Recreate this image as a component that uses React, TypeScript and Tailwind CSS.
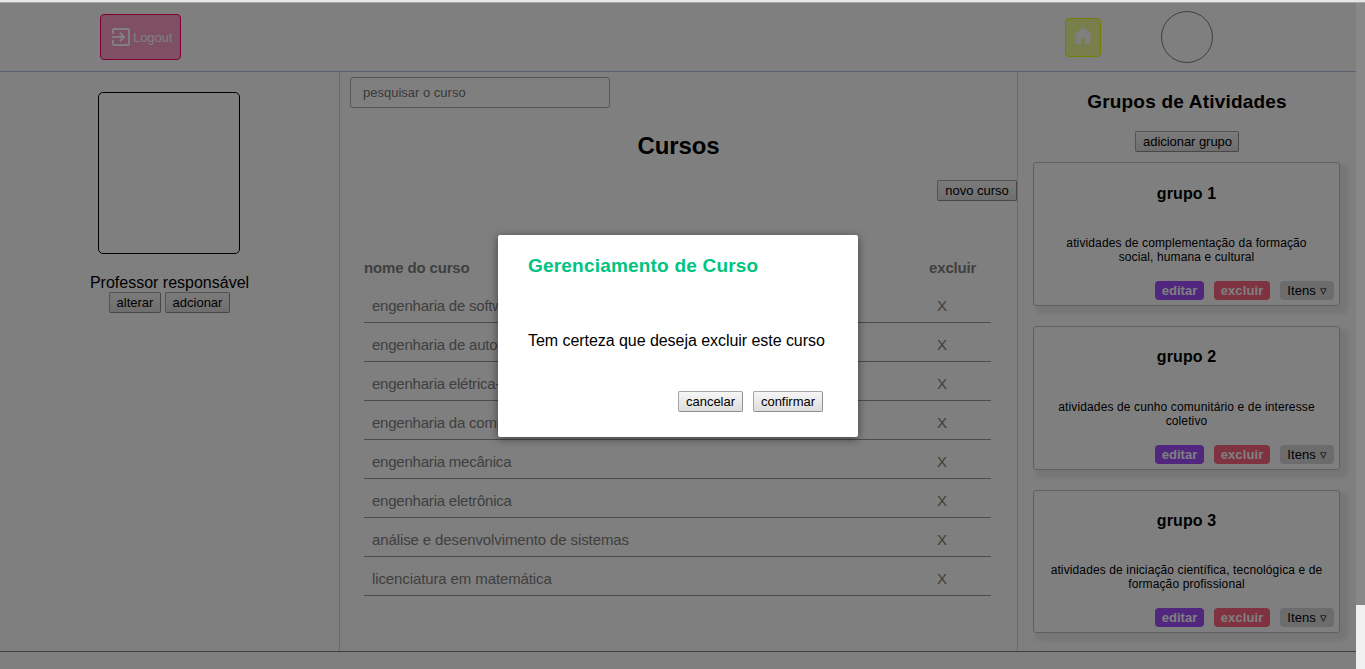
import type { ReactNode } from "react";
import { MdExitToApp, MdHome } from "react-icons/md";

const cursos = [
  "engenharia de software",
  "engenharia de automação",
  "engenharia elétrica-eletrônica",
  "engenharia da computação",
  "engenharia mecânica",
  "engenharia eletrônica",
  "análise e desenvolvimento de sistemas",
  "licenciatura em matemática",
];

const grupos = [
  { nome: "grupo 1", descricao: "atividades de complementação da formação social, humana e cultural" },
  { nome: "grupo 2", descricao: "atividades de cunho comunitário e de interesse coletivo" },
  { nome: "grupo 3", descricao: "atividades de iniciação científica, tecnológica e de formação profissional" },
];

function Botao({ children, className }: { children: ReactNode; className: string }) {
  return (
    <button
      className={`flex h-[21px] shrink-0 items-center justify-center whitespace-nowrap rounded-[2px] border border-[#a6a6a6] border-b-[#8f8f8f] border-r-[#8f8f8f] bg-linear-to-b from-[#f6f6f6] to-[#dddddd] text-[13px] leading-[15px] text-black ${className}`}
    >
      {children}
    </button>
  );
}

function Cabecalho() {
  return (
    <header className="flex h-[69px] shrink-0 items-start border-b border-[#b0c4de]">
      <button className="mt-[11px] ml-[100px] flex h-[46px] w-[81px] items-center rounded-[4px] border border-[#ff0066] bg-[#ffa0c8] pl-2 text-[13px] text-white">
        <MdExitToApp size={24} className="shrink-0" />
        <span className="pt-px tracking-[-0.1px]">Logout</span>
      </button>
      <button className="mt-[15px] ml-auto flex h-[39px] w-9 items-start justify-center rounded-[4px] border border-[#e1ff00] bg-[#f0ff99] pt-[5px] text-white">
        <MdHome size={24} className="shrink-0" />
      </button>
      <div className="mt-2 mr-[143px] ml-[60px] size-[52px] rounded-full border border-[#808080]" />
    </header>
  );
}

function Perfil() {
  return (
    <aside className="flex w-[340px] shrink-0 flex-col items-center border-r border-[#d3d3d3] pt-5">
      <div className="mr-px h-[162px] w-[142px] rounded-[5px] border border-black" />
      <p className="mt-5 text-base leading-[18px]">Professor responsável</p>
      <div className="flex gap-1">
        <Botao className="w-[52px]">alterar</Botao>
        <Botao className="w-[65px]">adcionar</Botao>
      </div>
    </aside>
  );
}

function Cursos() {
  return (
    <main className="flex w-[678px] shrink-0 flex-col border-r border-[#d3d3d3]">
      <input
        placeholder="pesquisar o curso"
        className="mt-[5px] ml-[10px] h-[31px] w-[260px] rounded-[3px] border border-[#a9a9a9] px-3 text-[13px] placeholder:text-[#757575]"
      />
      <h1 className="mt-6 text-center text-2xl leading-7 font-bold tracking-[-0.1px]">Cursos</h1>
      <div className="mt-5 flex justify-end">
        <Botao className="w-20">novo curso</Botao>
      </div>
      <table className="mt-[49px] ml-6 w-[627px] table-fixed border-collapse text-[15px] leading-[17px] tracking-[-0.11px] text-[#808080]">
        <thead>
          <tr className="h-[33px] align-middle">
            <th className="pt-px text-left font-bold tracking-[-0.15px]">nome do curso</th>
            <th className="w-[62px] pt-px text-left font-bold tracking-[-0.15px]">excluir</th>
          </tr>
        </thead>
        <tbody>
          {cursos.map((curso) => (
            <tr key={curso} className="h-[39px] border-b border-[#999999]">
              <td className={`px-2 pt-[6px] pb-0 ${curso.startsWith("engenharia") ? "tracking-[-0.22px]" : ""}`}>{curso}</td>
              <td className="px-2 pt-[6px] pb-0">X</td>
            </tr>
          ))}
        </tbody>
      </table>
    </main>
  );
}

function Grupos() {
  return (
    <aside className="flex grow flex-col items-center pt-[19px]">
      <h2 className="text-[19px] leading-[22px] font-bold tracking-[0.2px]">Grupos de Atividades</h2>
      <Botao className="mt-[18px] mb-[10.4px] w-[104px] pl-px tracking-[-0.05px]">adicionar grupo</Botao>
      <div className="mr-px flex flex-col gap-5">
        {grupos.map(({ nome, descricao }) => (
          <section
            key={nome}
            className="flex h-[143.6px] w-[307px] flex-col items-center rounded-[3px] border border-[#c0c0c0] pt-[21.2px] shadow-[5px_5px_5px_3px_rgba(0,0,0,0.08)]"
          >
            <h3 className="text-base leading-[18px] font-bold tracking-[0.1px]">{nome}</h3>
            <p className="mt-[33.5px] w-[275px] text-center text-xs leading-[14px] tracking-[0.12px]">{descricao}</p>
            <div className="mt-[16.9px] mr-[5px] flex gap-[10px] self-end text-[13px] leading-[19px]">
              <button className="h-[19px] w-[49px] rounded-[4px] bg-[#a04dff] font-bold text-white">editar</button>
              <button className="h-[19px] w-14 rounded-[4px] bg-[#ff6680] font-bold tracking-[0.1px] text-white">excluir</button>
              <button className="h-[19px] w-[54px] rounded-[4px] bg-[#d9d9d9] tracking-[0.1px] whitespace-nowrap">Itens ▿</button>
            </div>
          </section>
        ))}
      </div>
    </aside>
  );
}

function Confirmacao() {
  return (
    <div className="absolute inset-0 flex items-start justify-center bg-black/50">
      <div
        role="dialog"
        className="mt-[232px] h-[202px] w-[360px] rounded-[2px] bg-white px-[30px] pt-5 shadow-[0_2px_8px_rgba(0,0,0,0.5)]"
      >
        <h2 className="text-[19px] leading-[22px] font-bold tracking-[0.2px] text-[#00c47f]">Gerenciamento de Curso</h2>
        <p className="mt-[55px] text-base leading-[18px] tracking-[-0.05px] whitespace-nowrap">Tem certeza que deseja excluir este curso</p>
        <div className="mt-[41px] mr-[5px] flex justify-end gap-[10px]">
          <Botao className="w-[65px]">cancelar</Botao>
          <Botao className="w-[70px]">confirmar</Botao>
        </div>
      </div>
    </div>
  );
}

export default function App() {
  return (
    <div className="flex h-[669px] w-[1365px] flex-col overflow-hidden bg-white font-['Liberation_Sans',Arial,sans-serif] text-black">
      <div className="h-[3px] shrink-0 border-b border-[#a6a6a6] bg-[#e6e6e6]" />
      <div className="flex min-h-0 grow">
        <div className="relative flex w-[1356px] shrink-0 flex-col">
          <Cabecalho />
          <div className="flex h-[579px] shrink-0">
            <Perfil />
            <Cursos />
            <Grupos />
          </div>
          <footer className="grow border-t border-[#808080]" />
          <Confirmacao />
        </div>
        <div className="grow bg-[#f0f0f0]">
          <div className="h-[602px] bg-[#888888]" />
        </div>
      </div>
    </div>
  );
}
